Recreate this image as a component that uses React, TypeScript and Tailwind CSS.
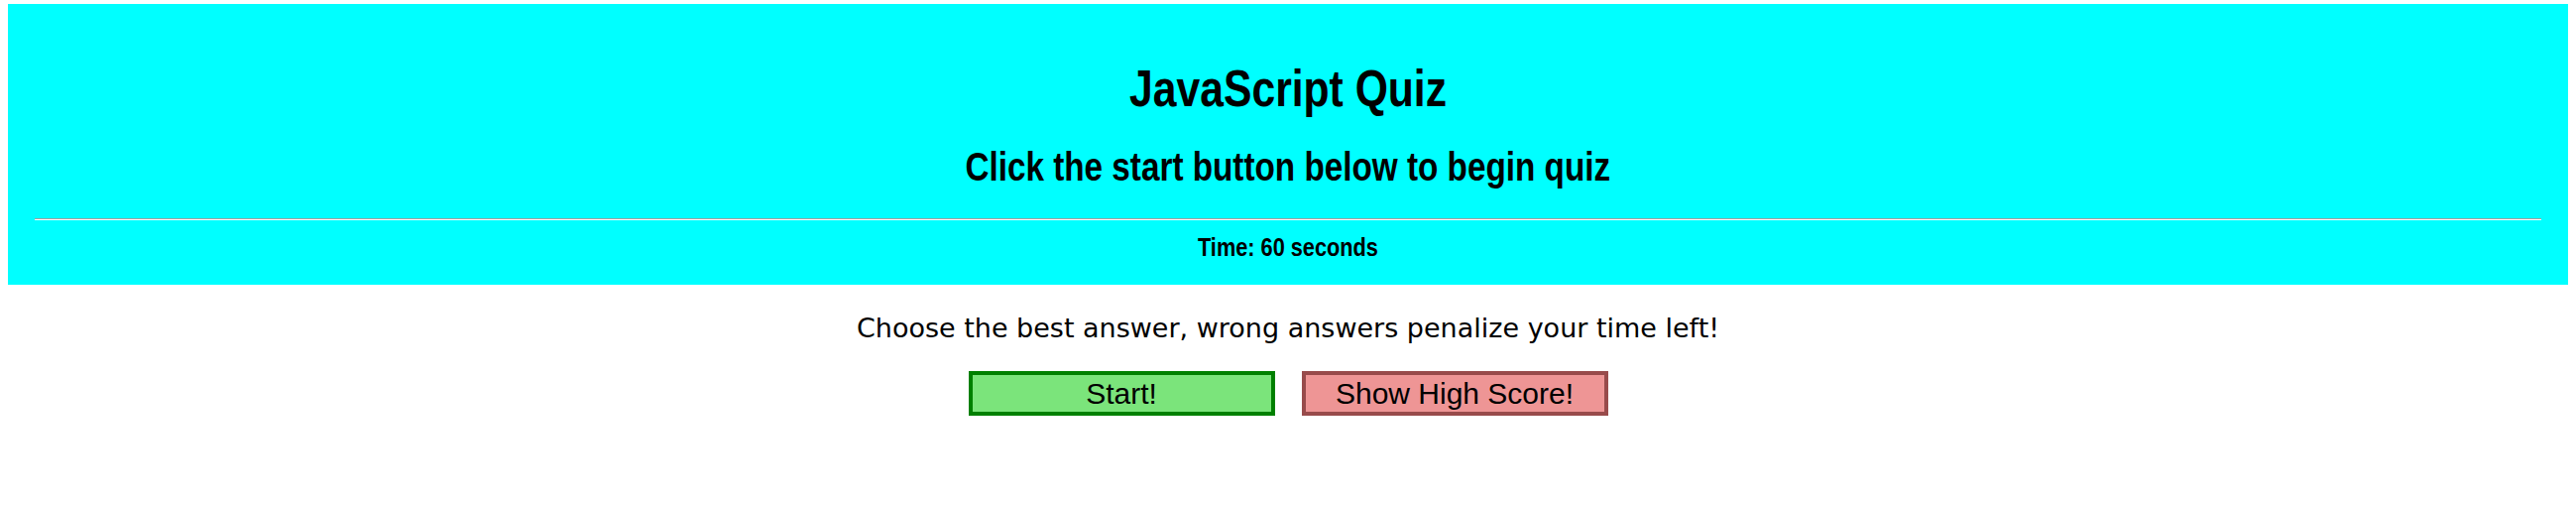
import React from 'react';

// Arial Narrow look: Liberation Sans bold squeezed horizontally
const narrow = "inline-block font-['Liberation_Sans',Arial,sans-serif] font-bold leading-none scale-x-[0.82]";

const App: React.FC = () => {
  return (
    <div className="min-h-screen bg-white text-black">
      {/* Header */}
      <header className="mx-2 mt-1 flex h-[283px] flex-col items-center bg-[#00ffff] px-[27px] pt-[59px]">
        <h1 className={`${narrow} text-[52px]`}>JavaScript Quiz</h1>
        <h3 className={`${narrow} mt-[33px] text-[40.6px]`}>Click the start button below to begin quiz</h3>
        <hr className="mt-[31px] h-0 w-full border-t border-b border-t-[#a0a0a0] border-b-white" />
        <p className={`${narrow} mt-[14px] text-[26.5px]`}>Time: 60 seconds</p>
      </header>

      {/* Intro + actions */}
      <main className="flex flex-col items-center">
        <p className="mt-[30px] font-['DejaVu_Sans',Verdana,sans-serif] text-[27px] leading-none">
          Choose the best answer, wrong answers penalize your time left!
        </p>
        <div className="mt-[30px] flex gap-[27px] font-['Liberation_Sans',Arial,sans-serif] text-[30px] leading-none">
          <button className="flex h-[45px] w-[309px] items-center justify-center border-4 border-[#008000] bg-[#7be47b]">
            Start!
          </button>
          <button className="flex h-[45px] w-[309px] items-center justify-center border-4 border-[#984b4b] bg-[#ee9595]">
            Show High Score!
          </button>
        </div>
      </main>
    </div>
  );
};

export default App;
